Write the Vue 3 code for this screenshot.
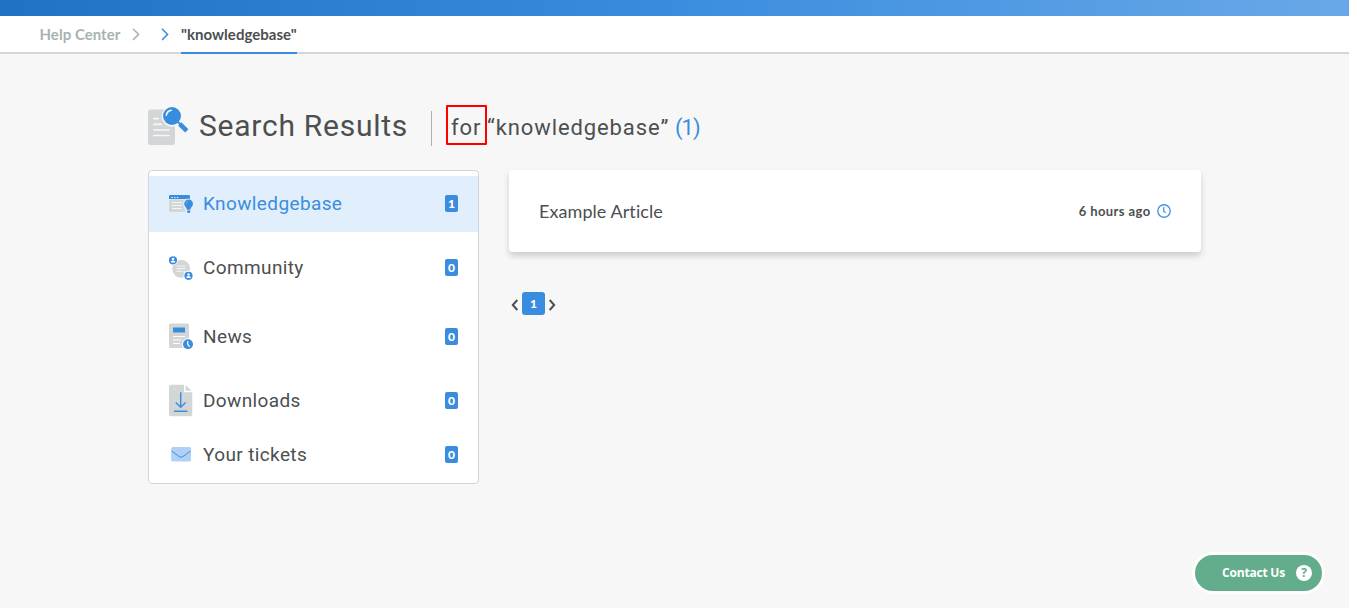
<script setup>
const items = [
  { label: 'Knowledgebase', count: 1, key: 'kb', active: true },
  { label: 'Community', count: 0, key: 'community' },
  { label: 'News', count: 0, key: 'news' },
  { label: 'Downloads', count: 0, key: 'downloads' },
  { label: 'Your tickets', count: 0, key: 'tickets' },
]
</script>

<template>
  <div class="page">
    <div class="topbar"></div>
    <nav class="crumbs">
      <span class="crumb">Help Center</span>
      <svg class="chev c1" width="8" height="13" viewBox="0 0 8 13"><path d="M1 .8 6.6 6.4 1 12" /></svg>
      <svg class="chev c2" width="8" height="13" viewBox="0 0 8 13"><path d="M1 .8 6.6 6.4 1 12" /></svg>
      <span class="crumb current">"knowledgebase"</span>
    </nav>

    <header class="heading">
      <svg class="hicon" width="42" height="40" viewBox="0 0 42 40">
        <rect x="0" y="3.5" width="27" height="35.5" rx="2.5" fill="#d2d6d6" />
        <path d="M6 12.7h4M6 18.4h7M6 24h15M6 29.5h15" stroke="#f7f7f7" stroke-width="1.7" stroke-linecap="round" />
        <circle cx="24" cy="10.5" r="10.3" fill="#f7f7f7" />
        <path d="M29 15 40 26" stroke="#f7f7f7" stroke-width="6" />
        <path d="M29 15 33 19" stroke="#3a8dde" stroke-width="2" />
        <path d="m31.8 18 7 6.8" stroke="#3a8dde" stroke-width="4.6" />
        <circle cx="24" cy="10" r="9" fill="#3a8dde" />
        <path d="M18.3 9.2c.4-2.7 2.2-4.5 4.9-5" fill="none" stroke="#fff" stroke-width="1.5" stroke-linecap="round" />
      </svg>
      <h1>Search Results</h1>
      <div class="query">
        <span class="for">for</span>
        <span class="term">“knowledgebase”</span>
        <span class="total">(1)</span>
      </div>
    </header>

    <main class="content">
      <aside class="side">
        <div v-for="i in items" :key="i.key" class="item" :class="[i.key, { active: i.active }]">
          <span class="icon">
            <svg v-if="i.key === 'kb'" width="25" height="20" viewBox="0 0 25 20">
              <rect y="5.5" width="20.5" height="12.5" rx="1.5" fill="#d2d6d6" />
              <path d="M1.3 1h18.4q1.3 0 1.3 1.3V5H0V2.300Q0 1 1.300 1" fill="#3a8dde" />
              <path d="M2.500 3.500h1.300M5.200 3.500h1.300M7.900 3.500h1.300" stroke="#fff" />
              <path d="M3 8.500h10M3 11.500h10M3 14.500h10" stroke="#f2f4f5" stroke-width="1.200" />
              <path d="M14 10a5.500 5.500 0 0 1 11 0c0 3-2.200 4-2.500 9h-6c-.3-5-2.500-6-2.500-9" fill="#e1eefb" />
              <path d="M15.200 9.800a4.400 4.400 0 0 1 8.800 0c0 2.700-2.400 3.200-2.700 6h-3.400c-.3-2.800-2.700-3.300-2.700-6M18 16.500h3.300v1.300L20.500 19h-1.700l-.8-1.200z" fill="#3a8dde" />
              <path d="M17 9.500q.3-1.800 2-2.300" fill="none" stroke="#8bbdec" stroke-width=".7" />
            </svg>
            <svg v-else-if="i.key === 'community'" width="25" height="25" viewBox="0 0 25 25">
              <circle cx="12.200" cy="12.800" r="9" fill="#d2d6d6" />
              <path d="M7.500 10h9M7.500 12.700h9M7.500 15.300h5" stroke="#f4f4f4" stroke-width="1.200" />
              <path d="M13.500 15.300h3l-1 2z" fill="#f4f4f4" />
              <g v-for="p in [[4, 4.3], [19.500, 19.800]]" :key="p[0]">
                <circle :cx="p[0]" :cy="p[1]" r="5" fill="#fff" />
                <circle :cx="p[0]" :cy="p[1]" r="4.100" fill="#3a8dde" />
                <circle :cx="p[0]" :cy="p[1] - 1.200" r="1.250" fill="#fff" />
                <path :d="`M${p[0] - 2.300} ${p[1] + 2.200}q0-1.900 2.300-1.900t2.300 1.900z`" fill="#fff" />
              </g>
            </svg>
            <svg v-else-if="i.key === 'news'" width="25" height="27" viewBox="0 0 25 27">
              <rect y=".5" width="20" height="24.500" rx="1.500" fill="#d2d6d6" />
              <rect x="4" y="4.500" width="12" height="5" fill="#3a8dde" />
              <path d="M4 13.500h12M4 17h8M4 20.500h7" stroke="#fff" stroke-width="1.100" />
              <circle cx="19" cy="21.300" r="6" fill="#fff" />
              <circle cx="19" cy="21.300" r="5" fill="#3a8dde" />
              <path d="M18.700 18.500v3l1.700 1.900" fill="none" stroke="#fff" stroke-width="1.200" stroke-linecap="round" />
            </svg>
            <svg v-else-if="i.key === 'downloads'" width="25" height="33" viewBox="0 0 25 33">
              <path d="M1.800.8H15v7.400h8.300v22a2 2 0 0 1-2 2H2a2 2 0 0 1-2-2V2.800a2 2 0 0 1 1.800-2" fill="#d2d6d6" />
              <path d="M16.500 1v5.700h6z" fill="#d2d6d6" />
              <path d="M11.700 8.300v15M6.800 18.400l4.900 4.900 4.900-4.900M5 27.300h13.500" fill="none" stroke="#3a8dde" stroke-width="1.400" />
            </svg>
            <svg v-else width="25" height="17" viewBox="0 0 25 17">
              <rect x="2.200" y="1" width="19.800" height="14.500" rx="1.500" fill="#b0d1f5" />
              <path d="m2.700 5 7.600 5.600q1.800 1.200 3.600 0L21.500 5" fill="none" stroke="#3a8dde" stroke-width="1" />
            </svg>
          </span>
          <span class="label">{{ i.label }}</span>
          <span class="badge">{{ i.count }}</span>
        </div>
      </aside>

      <section class="results">
        <article class="card">
          <span class="title">Example Article</span>
          <span class="time">6 hours ago</span>
          <svg width="14" height="14" viewBox="0 0 14 14" fill="none" stroke="#4a96e2">
            <circle cx="7" cy="7" r="6.200" stroke-width="1.400" />
            <path d="M6.700 3v4.200l2 1.600" stroke-width="1.300" />
          </svg>
        </article>
        <div class="pager">
          <svg width="8" height="12" viewBox="0 0 8 12"><path d="M6.300 1 1.800 6l4.500 5" /></svg>
          <span class="num">1</span>
          <svg width="8" height="12" viewBox="0 0 8 12"><path d="M1.700 1 6.200 6l-4.500 5" /></svg>
        </div>
      </section>
    </main>

    <button class="contact">
      <span class="ctext">Contact Us</span>
      <span class="q">?</span>
    </button>
  </div>
</template>

<style>
body { background: #f7f7f7; }
</style>

<style scoped>
.page {
  position: relative;
  box-sizing: border-box;
  height: 608px;
  overflow: hidden;
  background: #f7f7f7;
  color: #4c4f50;
  font-family: Lato, sans-serif;
}
.topbar { height: 16px; background: linear-gradient(90deg, #2072c4, #3a8dde 50%, #69a8e8); }
.crumbs {
  display: flex;
  box-sizing: border-box;
  height: 38px;
  padding-left: 39.5px;
  background: #fff;
  border-bottom: 2px solid #d2d6d6;
  font-size: 15px;
  font-weight: 700;
  line-height: 37px;
  letter-spacing: .03px;
}
.crumb { box-sizing: border-box; height: 38px; color: #a9b2b2; white-space: nowrap; width: 81.5px; }
.crumb.current { width: 116px; color: #4c4f50; border-bottom: 2px solid #3a8dde; }
.chev { fill: none; stroke: #a9b2b2; stroke-width: 1.5; margin-top: 12px; }
.c1 { margin-left: 10.5px; }
.c2 { margin-left: 21.5px; margin-right: 12px; stroke: #3a8dde; }
.heading { display: flex; height: 116px; padding-left: 148px; font-family: Roboto, sans-serif; }
.hicon { margin-top: 52px; }
h1 {
  margin: 51px 0 0 9px;
  width: 233px;
  font-size: 30px;
  line-height: 42px;
  font-weight: 400;
  letter-spacing: .75px;
  white-space: nowrap;
}
.query {
  display: flex;
  box-sizing: border-box;
  height: 35px;
  margin-top: 57px;
  margin-left: -1px;
  padding-left: 14px;
  border-left: 1px solid #a9b2b2;
  font-size: 22px;
  line-height: 33px;
  letter-spacing: .9px;
  white-space: nowrap;
}
.for {
  box-sizing: border-box;
  width: 41px;
  height: 40px;
  margin-top: -6px;
  padding-left: 3px;
  border: 2px solid #f00;
  border-radius: 1px;
  line-height: 41px;
}
.term { width: 188px; }
.total { color: #3a8dde; letter-spacing: -1px; }
.content { display: flex; gap: 30px; padding-left: 148px; }
.side {
  box-sizing: border-box;
  width: 331px;
  height: 314px;
  padding-top: 5px;
  background: #fff;
  border: 1px solid #d2d6d6;
  border-radius: 4px;
}
.item { display: flex; align-items: center; padding: 0 20px; }
.kb { height: 56px; }
.community { height: 72px; }
.news { height: 65px; }
.downloads { height: 64px; }
.tickets { height: 44px; }
.active { background: #e1eefb; }
.active .label { color: #3a8dde; }
.icon { display: flex; width: 34px; }
.downloads .icon, .tickets .icon { margin-bottom: 1px; }
.label { flex: 1; font: 400 19px/24px Roboto, sans-serif; letter-spacing: .38px; }
.badge {
  width: 13px;
  height: 17px;
  margin-bottom: 1px;
  border-radius: 2px;
  background: #3a8dde;
  color: #fff;
  font-size: 12px;
  font-weight: 900;
  line-height: 18px;
  text-align: center;
}
.news .badge { margin-bottom: 0; }
.results { width: 692px; }
.card {
  display: flex;
  align-items: center;
  box-sizing: border-box;
  height: 82px;
  padding: 0 30px;
  background: #fff;
  border-radius: 4px;
  box-shadow: 0 4px 6px rgba(0, 0, 0, .17);
}
.title { flex: 1; font-size: 18px; letter-spacing: .07px; }
.time { margin-right: 6.500px; font-size: 13px; font-weight: 700; letter-spacing: .4px; }
.pager { display: flex; align-items: center; gap: 3px; margin: 40px 0 0 2px; }
.pager svg { fill: none; stroke: #4c4f50; stroke-width: 2; margin-top: 2px; }
.num {
  width: 23px;
  height: 23px;
  border-radius: 3px;
  background: #3a8dde;
  color: #fff;
  font-size: 12px;
  font-weight: 900;
  line-height: 24px;
  text-align: center;
}
.contact {
  position: absolute;
  right: 24px;
  bottom: 14px;
  display: flex;
  align-items: center;
  justify-content: flex-end;
  gap: 11px;
  box-sizing: border-box;
  width: 133px;
  height: 42px;
  padding: 0 10px;
  border: 3px solid #fff;
  border-radius: 21px;
  background: #63ad8c;
  color: #fff;
  font: 700 12px "Open Sans", sans-serif;
  white-space: nowrap;
}
.ctext { letter-spacing: -.2px; margin-bottom: 1px; }
.q { width: 16px; height: 16px; border-radius: 50%; background: #fff; color: #63ad8c; line-height: 16px; text-align: center; }
</style>
